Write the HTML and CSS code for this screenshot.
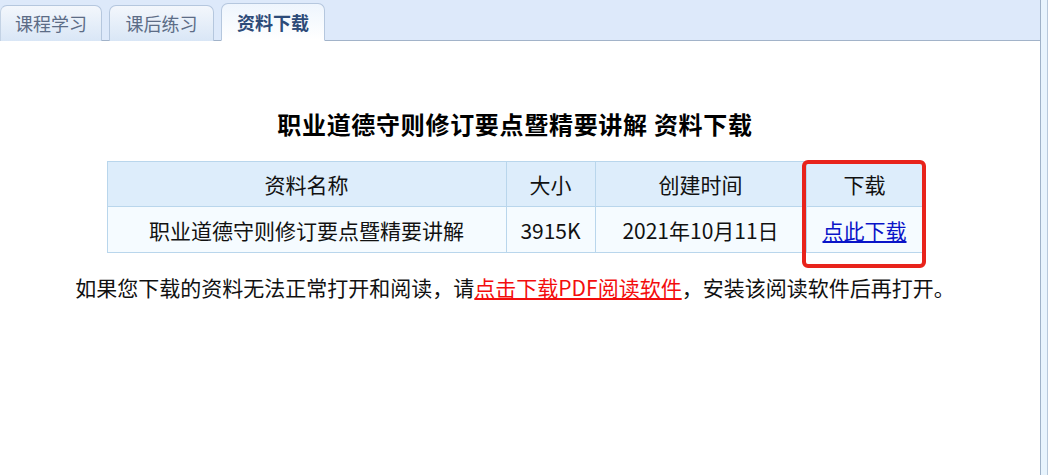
FILE: index.html
```html
<!DOCTYPE html>
<html>
<head>
  <meta charset="UTF-8">
  <link rel="stylesheet" href="styles.css">
</head>
<body>
  <div class="page">
    <div class="main">
      <!-- 标签栏 -->
      <div class="tabs">
        <div class="tab first">课程学习</div>
        <div class="tab second">课后练习</div>
        <div class="tab active">资料下载</div>
      </div>

      <!-- 资料下载 -->
      <div class="content">
        <h1 class="title">职业道德守则修订要点暨精要讲解 资料下载</h1>
        <div class="table-wrap">
          <table class="files">
            <tr>
              <th class="col-name">资料名称</th>
              <th class="col-size">大小</th>
              <th class="col-time">创建时间</th>
              <th class="col-down">下载</th>
            </tr>
            <tr>
              <td>职业道德守则修订要点暨精要讲解</td>
              <td>3915K</td>
              <td>2021年10月11日</td>
              <td><a href="#" class="down-link">点此下载</a></td>
            </tr>
          </table>
          <div class="mark"></div>
        </div>
        <p class="note">如果您下载的资料无法正常打开和阅读，请<a href="#" class="pdf-link">点击下载PDF阅读软件</a>，安装该阅读软件后再打开。</p>
      </div>
    </div>
    <div class="side"></div>
  </div>
</body>
</html>
```

FILE: styles.css
```css
/* 基础样式 */
body {
  margin: 0;
  background: #fff;
  font-family: "Microsoft YaHei", "Noto Sans CJK SC", "Noto Sans", sans-serif;
  color: #111;
}

.page {
  display: flex;
  height: 475px;
}

.main {
  width: 1040px;
}

.side {
  width: 6px;
  border-left: 1px solid #9fb2c8;
  border-right: 1px solid #b7c8da;
  background: #e8f4fd;
}

/* 标签栏 */
.tabs {
  display: flex;
  align-items: flex-end;
  gap: 7px;
  height: 40px;
  background: #dde9fa;
  border-bottom: 1px solid #a2b3c9;
}

.tab {
  width: 102px;
  height: 36px;
  box-sizing: border-box;
  border: 1px solid #b5c7de;
  border-bottom: none;
  border-radius: 7px 7px 0 0;
  background: linear-gradient(#f3f7fc, #d9e6f6);
  color: #5c6c86;
  font-size: 18px;
  line-height: 35px;
  text-align: center;
  margin-bottom: -1px;
}

.tab.first {
  border-left: 1px solid #c3d2e4;
}

.tab.second {
  width: 105px;
}

.tab.active {
  width: 104px;
  background: linear-gradient(#eef5fd, #fff);
  color: #2d4b79;
  font-weight: bold;
  height: 38px;
  line-height: 37px;
  border-bottom: 1px solid #fff;
}

/* 内容 */
.content {
  padding-right: 10px;
}

.title {
  margin: 66px 0 0;
  font-size: 24px;
  line-height: 34px;
  letter-spacing: 0.7px;
  text-align: center;
  color: #000;
}

.table-wrap {
  position: relative;
  width: 817px;
  margin: 20px auto 0;
}

.files {
  width: 817px;
  border-collapse: collapse;
  font-size: 21px;
}

.files th,
.files td {
  border: 1px solid #b9d6ec;
  text-align: center;
  font-weight: normal;
  padding: 0;
}

.files th {
  height: 44px;
  background: #ddedfb;
}

.files td {
  height: 45px;
  background: #f5fbff;
}

.col-name { width: 398px; }
.col-size { width: 88px; }
.col-time { width: 210px; }

.down-link {
  color: #0a14c8;
}

/* 红框标注 */
.mark {
  position: absolute;
  top: -1px;
  bottom: -15px;
  left: 695px;
  right: -2px;
  border: 4px solid #e8231b;
  border-radius: 6px;
}

.note {
  margin: 19px 0 0;
  font-size: 21px;
  line-height: 30px;
  text-align: center;
  color: #111;
}

.pdf-link {
  color: #f30d0d;
}
```
